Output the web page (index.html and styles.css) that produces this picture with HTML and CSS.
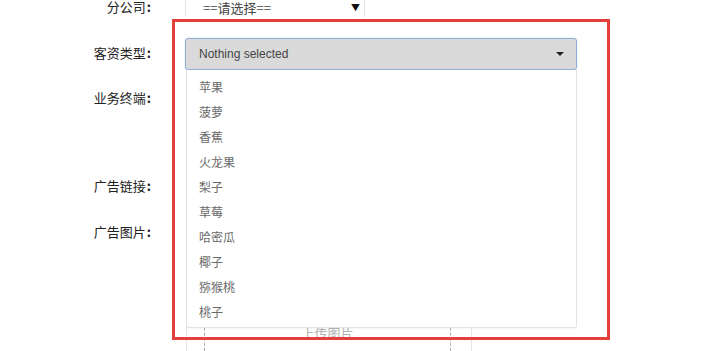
FILE: index.html
```html
<!DOCTYPE html>
<html lang="zh-CN">
<head>
<meta charset="utf-8">
<title>表单</title>
<link rel="stylesheet" href="styles.css">
</head>
<body>
<div class="page">
  <form class="form">
    <div class="row row-branch">
      <label class="label">分公司<b>:</b></label>
      <div class="plain-select">
        <span>==请选择==</span>
        <span class="tri">▼</span>
      </div>
    </div>
    <div class="row row-type">
      <label class="label">客资类型<b>:</b></label>
      <div class="bs-select">
        <button type="button" class="bs-btn">
          <span>Nothing selected</span>
          <span class="caret"></span>
        </button>
      </div>
    </div>
    <div class="row row-terminal">
      <label class="label">业务终端<b>:</b></label>
      <div class="blank"></div>
    </div>
    <div class="row row-link">
      <label class="label">广告链接<b>:</b></label>
      <div class="blank"></div>
    </div>
    <div class="row row-pic">
      <label class="label">广告图片<b>:</b></label>
      <div class="upload">
        <div class="upload-inner"><span>上传图片</span></div>
      </div>
    </div>
  </form>

  <ul class="menu">
    <li>苹果</li>
    <li>菠萝</li>
    <li>香蕉</li>
    <li>火龙果</li>
    <li>梨子</li>
    <li>草莓</li>
    <li>哈密瓜</li>
    <li>椰子</li>
    <li>猕猴桃</li>
    <li>桃子</li>
  </ul>

  <div class="highlight"></div>
</div>
</body>
</html>
```

FILE: styles.css
```css
html, body {
  margin: 0;
  padding: 0;
  background: #ffffff;
  overflow: hidden;
}
body {
  width: 713px;
  height: 351px;
  font-family: "Liberation Sans", "Noto Sans CJK SC", sans-serif;
  color: #222;
}
.page {
  position: relative;
  width: 713px;
  height: 351px;
  overflow: hidden;
}
.form {
  display: flex;
  flex-direction: column;
  margin-top: -3px;
}
.row {
  display: grid;
  grid-template-columns: 151px auto;
  column-gap: 34px;
  align-items: start;
}
.label {
  text-align: right;
  font-size: 13px;
  color: #222;
  line-height: 32px;
  font-family: "Noto Sans CJK SC", sans-serif;
}
.label b {
  font-weight: bold;
  margin-left: 1px;
}
.row-branch .label {
  line-height: 20px;
}
.plain-select {
  width: 180px;
  height: 20px;
  box-sizing: border-box;
  border-left: 1px solid #e4e4e4;
  border-right: 1px solid #e4e4e4;
  display: flex;
  align-items: center;
  justify-content: space-between;
  padding: 0 4px 0 17px;
  font-size: 13px;
  color: #444;
  font-family: "Noto Sans CJK SC", sans-serif;
}
.plain-select .tri {
  font-size: 9px;
  color: #111;
}
.row-type {
  margin-top: 21px;
}
.row-type .label {
  line-height: 29px;
}
.bs-btn {
  width: 392px;
  height: 32px;
  box-sizing: border-box;
  border: 1px solid #92acd9;
  border-radius: 3px;
  background: #dadada;
  box-shadow: 0 0 2px rgba(102, 153, 230, 0.35);
  display: flex;
  align-items: center;
  justify-content: space-between;
  padding: 0 12px 0 13px;
  font-family: "Liberation Sans", sans-serif;
  font-size: 12px;
  color: #444;
}
.caret {
  width: 0;
  height: 0;
  border-left: 4px solid transparent;
  border-right: 4px solid transparent;
  border-top: 4px solid #222;
}
.row-terminal {
  margin-top: 12px;
  height: 88px;
}
.row-link {
  height: 46px;
}
.row-pic {
  height: 160px;
}
.upload {
  margin-left: 1px;
  width: 286px;
  height: 160px;
  box-sizing: border-box;
  border: 1px solid #e6e6e6;
  padding: 14px 20px 0 17px;
}
.upload-inner {
  height: 130px;
  box-sizing: border-box;
  border: 1px dashed #a8a8a8;
  display: flex;
  align-items: flex-end;
  justify-content: center;
  padding-bottom: 18px;
  font-family: "Noto Sans CJK SC", sans-serif;
  font-size: 13px;
  color: #b4b4b4;
}
.menu {
  position: absolute;
  left: 186px;
  top: 70px;
  width: 391px;
  height: 258px;
  box-sizing: border-box;
  margin: 0;
  padding: 4px 0 0 0;
  list-style: none;
  background: #fff;
  border: 1px solid #e3e3e3;
  border-top: none;
  border-radius: 0 0 3px 3px;
  box-shadow: 0 1px 2px rgba(0, 0, 0, 0.04);
}
.menu li {
  height: 25px;
  line-height: 25px;
  padding-left: 12px;
  font-family: "Noto Sans CJK SC", sans-serif;
  font-size: 12px;
  color: #6a6a6a;
}
.highlight {
  position: absolute;
  left: 172px;
  top: 19px;
  width: 438px;
  height: 321px;
  box-sizing: border-box;
  border: 3px solid #e4403b;
  pointer-events: none;
}
```
